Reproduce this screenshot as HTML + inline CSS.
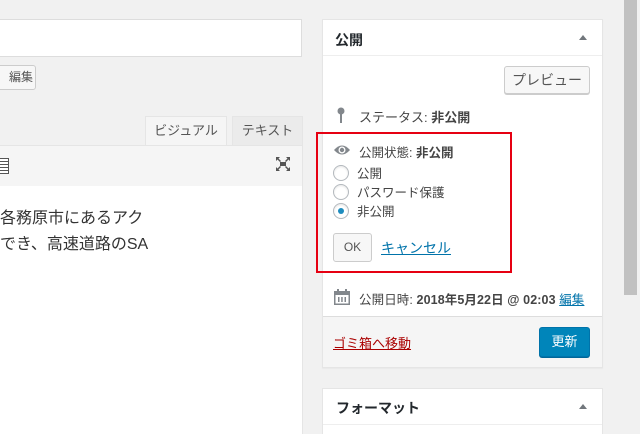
<!DOCTYPE html><html><head><meta charset="utf-8"><style>
html,body{margin:0;width:640px;height:434px;overflow:hidden}
body{background:#f1f1f1;position:relative;font-family:"Liberation Sans","Noto Sans CJK JP",sans-serif;font-size:13px;color:#444}
.a{position:absolute}
</style></head><body>
<div class="a" style="left:-1px;top:19px;width:301px;height:36px;background:#fff;border:1px solid #ddd"></div>
<div class="a" style="left:-4px;top:65px;width:36px;height:23px;background:#f7f7f7;border:1px solid #ccc;border-radius:3px;font-size:12px;line-height:23px;text-align:right;padding-right:2px;color:#555">編集</div>
<div class="a" style="left:145px;top:116px;width:80px;height:30px;background:#f5f5f5;border:1px solid #e5e5e5;border-bottom:none;text-align:center;line-height:28px;color:#555">ビジュアル</div>
<div class="a" style="left:232px;top:116px;width:69px;height:28px;background:#ebebeb;border:1px solid #e5e5e5;text-align:center;line-height:28px;color:#555">テキスト</div>
<div class="a" style="left:-1px;top:145px;width:302px;height:40px;background:#f5f5f5;border:1px solid #e5e5e5"></div>
<div class="a" style="left:0;top:158px;width:8px;height:14px;border:1px solid #555;border-left:none;background:repeating-linear-gradient(#fff 0 2px,#555 2px 3px)"></div>
<svg class="a" style="left:275px;top:156px" width="16" height="16" viewBox="0 0 16 16"><path d="M1 1h4L3.5 2.5 6 5 5 6 2.5 3.5 1 5zM15 1v4l-1.5-1.5L11 6 10 5l2.5-2.5L11 1zM1 15v-4l1.5 1.5L5 10l1 1-2.5 2.5L5 15zM15 15h-4l1.5-1.5L10 11l1-1 2.5 2.5L15 11z M5 6h6v4H5z" fill="#555"/></svg>
<div class="a" style="left:-1px;top:186px;width:302px;height:260px;background:#fff;border:1px solid #e5e5e5;border-top:none"></div>
<div class="a" style="left:0;top:206px;font-size:16px;color:#333;line-height:26px">各務原市にあるアク<br>でき、高速道路のSA</div>

<div class="a" style="left:322px;top:19px;width:279px;height:347px;background:#fff;border:1px solid #e5e5e5;box-shadow:0 1px 1px rgba(0,0,0,.04)"></div>
<div class="a" style="left:323px;top:55px;width:279px;height:1px;background:#eee"></div>
<div class="a" style="left:335px;top:30px;font-weight:bold;font-size:14px;color:#23282d">公開</div>
<div class="a" style="left:579px;top:35px;width:0;height:0;border-left:4px solid transparent;border-right:4px solid transparent;border-bottom:5px solid #72777c"></div>
<div class="a" style="left:504px;top:66px;width:84px;height:26px;background:#f7f7f7;border:1px solid #ccc;border-radius:3px;box-shadow:0 1px 0 #ccc;text-align:center;line-height:26px;color:#555;font-size:14px">プレビュー</div>
<svg class="a" style="left:336px;top:107px" width="10" height="17" viewBox="0 0 10 17"><circle cx="5" cy="4" r="3.5" fill="#82878c"/><rect x="4" y="6" width="2" height="10" fill="#82878c"/></svg>
<div class="a" style="left:359px;top:107px;color:#444">ステータス: <b>非公開</b></div>
<div class="a" style="left:316px;top:132px;width:192px;height:137px;border:2px solid #e60012"></div>
<svg class="a" style="left:333px;top:143px" width="18" height="14" viewBox="0 0 18 14"><path d="M1 7Q9-2 17 7Q9 16 1 7z" fill="#82878c"/><circle cx="9" cy="7" r="3.5" fill="#fff"/><circle cx="9" cy="7" r="2.2" fill="#82878c"/></svg>
<div class="a" style="left:359px;top:142px;font-size:12.5px">公開状態: <b>非公開</b></div>
<div class="a" style="left:333px;top:165px;width:14px;height:14px;border:1px solid #b4b9be;border-radius:50%;box-shadow:inset 0 1px 2px rgba(0,0,0,.1)"></div>
<div class="a" style="left:333px;top:184px;width:14px;height:14px;border:1px solid #b4b9be;border-radius:50%;box-shadow:inset 0 1px 2px rgba(0,0,0,.1)"></div>
<div class="a" style="left:333px;top:203px;width:14px;height:14px;border:1px solid #b4b9be;border-radius:50%;box-shadow:inset 0 1px 2px rgba(0,0,0,.1)"></div>
<div class="a" style="left:338px;top:208px;width:6px;height:6px;border-radius:50%;background:#1e8cbe"></div>
<div class="a" style="left:357px;top:165px;font-size:12.5px;line-height:19px">公開<br>パスワード保護<br>非公開</div>
<div class="a" style="left:333px;top:233px;width:37px;height:27px;background:#f7f7f7;border:1px solid #ccc;border-radius:3px;text-align:center;line-height:27px;font-size:12px;color:#555">OK</div>
<div class="a" style="left:381px;top:238px;color:#0073aa;text-decoration:underline;font-size:14px">キャンセル</div>
<svg class="a" style="left:334px;top:289px" width="16" height="16" viewBox="0 0 16 16"><path d="M0 2h16v14H0z" fill="#82878c"/><rect x="1.5" y="6" width="13" height="8.5" fill="#fff"/><path d="M4 8h1.5v5H4zM7.2 8h1.5v5H7.2zM10.5 8H12v5h-1.5z" fill="#82878c"/><rect x="3" y="0" width="2" height="3" fill="#82878c"/><rect x="11" y="0" width="2" height="3" fill="#82878c"/></svg>
<div class="a" style="left:359px;top:289px;font-size:12.5px;letter-spacing:0.1px">公開日時: <b>2018年5月22日 @ 02:03</b> <span style="color:#0073aa;text-decoration:underline">編集</span></div>
<div class="a" style="left:323px;top:316px;width:279px;height:50px;background:#f5f5f5;border-top:1px solid #ddd"></div>
<div class="a" style="left:333px;top:333px;color:#a00;text-decoration:underline">ゴミ箱へ移動</div>
<div class="a" style="left:539px;top:327px;width:51px;height:30px;background:#0085ba;border:1px solid #0073aa;border-radius:3px;box-sizing:border-box;box-shadow:0 1px 0 #006799;color:#fff;text-align:center;line-height:28px">更新</div>

<div class="a" style="left:322px;top:388px;width:279px;height:60px;background:#fff;border:1px solid #e5e5e5"></div>
<div class="a" style="left:323px;top:424px;width:279px;height:1px;background:#eee"></div>
<div class="a" style="left:336px;top:398px;font-weight:bold;font-size:14px;color:#23282d">フォーマット</div>
<div class="a" style="left:579px;top:404px;width:0;height:0;border-left:4px solid transparent;border-right:4px solid transparent;border-bottom:5px solid #72777c"></div>
<div class="a" style="left:623px;top:0;width:17px;height:434px;background:#f1f1f1"></div>
<div class="a" style="left:624px;top:0;width:13px;height:295px;background:#c1c1c1"></div>
</body></html>
